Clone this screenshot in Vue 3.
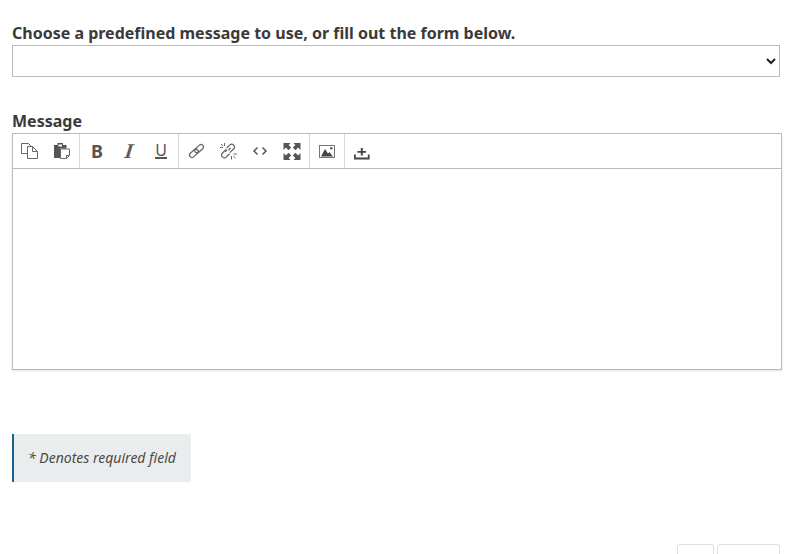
<script setup>
const groups = [
  ['copy', 'paste'],
  ['bold', 'italic', 'underline'],
  ['link', 'unlink', 'code', 'fullscreen'],
  ['image'],
  ['upload']
]
</script>

<template>
  <div class="page">
    <form class="form">
      <label class="label" for="predefined">Choose a predefined message to use, or fill out the form below.</label>
      <select id="predefined" class="select">
        <option></option>
      </select>

      <label class="label message-label">Message</label>
      <div class="editor">
        <div class="toolbar">
          <div v-for="(group, i) in groups" :key="i" class="group">
            <button v-for="name in group" :key="name" type="button" class="tool">
              <svg v-if="name === 'copy'" width="18" height="18" viewBox="0 0 18 18" fill="none" stroke="#666" stroke-width="1">
                <path d="M6.5 11.5H0.5V1.5H7.5L10.5 4.5" />
                <path d="M6.5 4.5H11.5L16.5 9.5V16.5H6.5Z" fill="#fff" />
                <path d="M11.5 4.5V9.5H16.5" />
              </svg>
              <svg v-else-if="name === 'paste'" width="18" height="18" viewBox="0 0 18 18">
                <path d="M1 3H4.5V1H10V3H13.5V6.5H7V16H1Z" fill="#555" />
                <path d="M5.5 2.5H9V4.5H5.5Z" fill="#fff" />
                <path d="M7.5 7H16.5V13.5L13.5 16.5H7.5Z" fill="#fff" stroke="#666" />
                <path d="M13.5 16V13.5H16" fill="none" stroke="#666" />
              </svg>
              <span v-else-if="name === 'bold'" class="glyph bold">B</span>
              <span v-else-if="name === 'italic'" class="glyph italic">I</span>
              <span v-else-if="name === 'underline'" class="glyph underline">U</span>
              <svg v-else-if="name === 'link'" width="18" height="18" viewBox="0 0 18 18" fill="none" stroke="#666" stroke-width="1.3">
                <g transform="rotate(-42 9.5 9)">
                  <rect x="1" y="6.6" width="10" height="4.8" rx="2.4" />
                  <rect x="8" y="6.6" width="10" height="4.8" rx="2.4" />
                </g>
              </svg>
              <svg v-else-if="name === 'unlink'" width="18" height="18" viewBox="0 0 18 18" fill="none" stroke="#666" stroke-width="1.3">
                <path d="M7.2 7.4 3.2 11.2a2.4 2.4 0 0 0 0 3.4l.5.5a2.4 2.4 0 0 0 3.4 0l3.5-3.4" />
                <path d="M7.6 6.2 10.9 2.9a2.4 2.4 0 0 1 3.4 0l.5.5a2.4 2.4 0 0 1 0 3.4l-3.9 3.8" />
                <path d="M9.4 8.2 11.8 5.9M6.2 9.8 8 8" />
                <path d="M5.5 1v3M1 5.5h3M2 2l2.2 2.2M12.5 14v3.5M14.5 12H18M14.2 13.8l2.4 2.4" stroke-width="1" />
              </svg>
              <svg v-else-if="name === 'code'" width="18" height="18" viewBox="0 0 18 18" fill="none" stroke="#555" stroke-width="1.5">
                <path d="M6.5 5.5 3 9l3.5 3.5M11.5 5.5 15 9l-3.5 3.5" />
              </svg>
              <svg v-else-if="name === 'fullscreen'" width="18" height="18" viewBox="0 0 18 18" fill="#555">
                <path d="M0.5 1H7.5L5.6 2.9 8.2 5.5 5.5 8.2 2.9 5.6 0.5 8ZM17.5 1V8L15.1 5.6 12.5 8.2 9.8 5.5 12.4 2.9 10.5 1ZM0.5 18V11L2.9 13.4 5.5 10.8 8.2 13.5 5.6 16.1 7.5 18ZM17.5 18H10.5L12.4 16.1 9.8 13.5 12.5 10.8 15.1 13.4 17.5 11Z" />
              </svg>
              <svg v-else-if="name === 'image'" width="18" height="18" viewBox="0 0 18 18">
                <rect x="1.5" y="3.5" width="15" height="12" fill="#fff" stroke="#777" />
                <path d="M3 14.5 7 7 10 11.5 11.5 10 15 14.5Z" fill="#444" />
                <circle cx="13.3" cy="6.3" r="1.2" fill="#555" />
              </svg>
              <svg v-else-if="name === 'upload'" width="18" height="18" viewBox="0 0 18 18" fill="#444">
                <path d="M7.8 6H9.8V9H13V10.8H9.8V13.5H7.8V10.8H4.5V9H7.8Z" />
                <path d="M1 12.5H2.8V15.5H14.8V12.5H16.6V17.5H1Z" />
              </svg>
            </button>
          </div>
        </div>
        <div class="body"></div>
      </div>

      <div class="required">* Denotes required field</div>

      <div class="actions">
        <button type="button" class="action small"></button>
        <button type="button" class="action large"></button>
      </div>
    </form>
  </div>
</template>

<style>
html, body {
  margin: 0;
  background: #fff;
  overflow: hidden;
}
</style>

<style scoped>
.page {
  height: 554px;
  overflow: hidden;
  font-family: "Noto Sans", sans-serif;
  font-variant-ligatures: none;
  color: #3a3a3a;
}

.form {
  display: flex;
  flex-direction: column;
  align-items: flex-start;
  padding: 22px 12px 0;
}

.label {
  font-size: 16px;
  font-weight: 700;
  line-height: 22px;
}

.select {
  display: block;
  width: 768px;
  height: 32px;
  margin-top: 1px;
  box-sizing: border-box;
  border: 1px solid #bbb;
  border-radius: 0;
  background: #fff;
  font-size: 14px;
  padding: 0 4px;
  color: #222;
}

.message-label {
  margin-top: 33px;
  line-height: 23px;
}

.editor {
  width: 770px;
  height: 237px;
  box-sizing: border-box;
  border: 1px solid #bbb;
  box-shadow: 0 1px 2px rgba(0, 0, 0, 0.12);
  display: flex;
  flex-direction: column;
}

.toolbar {
  display: flex;
  height: 35px;
  box-sizing: border-box;
  border-bottom: 1px solid #bbb;
  flex: none;
}

.group {
  display: flex;
  padding: 0 1px;
  border-right: 1px solid #d8d8d8;
}

.group:last-child {
  border-right: 0;
}

.tool {
  width: 32px;
  height: 34px;
  padding: 0;
  border: 0;
  background: none;
  display: flex;
  align-items: center;
  justify-content: center;
}

.glyph {
  font-family: "Noto Sans", sans-serif;
  color: #555;
  line-height: 1;
}

.bold {
  font-size: 18px;
  font-weight: 700;
}

.italic {
  font-family: "Liberation Serif", serif;
  font-size: 21px;
  font-weight: 700;
  font-style: italic;
  color: #5c5c5c;
  transform: skewX(-8deg);
}

.underline {
  font-size: 16px;
  line-height: 12px;
  padding-bottom: 1px;
  border-bottom: 2px solid #555;
  margin-top: 1px;
}

.body {
  flex: 1;
  background: #fff;
}

.required {
  margin-top: 64px;
  width: 179px;
  height: 48px;
  box-sizing: border-box;
  padding-left: 14px;
  border-left: 2px solid #1e6292;
  background: #eaedee;
  font-size: 14px;
  font-style: italic;
  line-height: 48px;
  white-space: nowrap;
  color: #4a4a4a;
}

.actions {
  align-self: flex-end;
  display: flex;
  gap: 3px;
  margin-top: 62px;
  margin-right: 2px;
}

.action {
  height: 30px;
  box-sizing: border-box;
  padding: 0;
  background: #fff;
  border: 1px solid #ddd;
  border-radius: 3px;
}

.small {
  width: 37px;
}

.large {
  width: 63px;
}
</style>
